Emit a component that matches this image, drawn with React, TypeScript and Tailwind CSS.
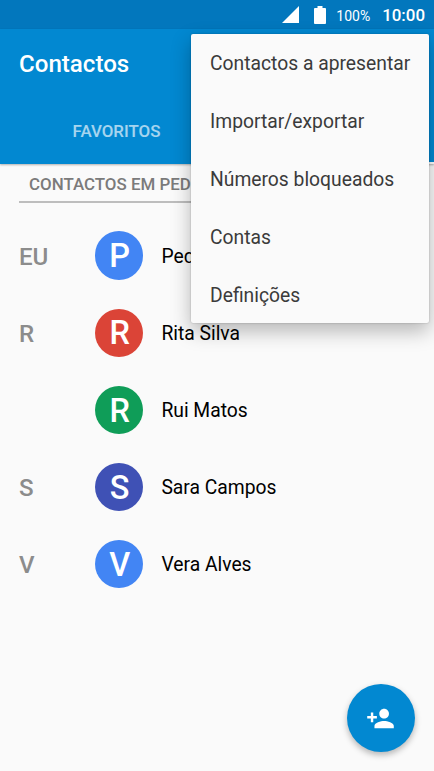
const contacts = [
  { section: 'EU', initial: 'P', name: 'Ped', color: 'bg-[#4285f4]' },
  { section: 'R', initial: 'R', name: 'Rita Silva', color: 'bg-[#db4437]' },
  { section: '', initial: 'R', name: 'Rui Matos', color: 'bg-[#0f9d58]' },
  { section: 'S', initial: 'S', name: 'Sara Campos', color: 'bg-[#3f51b5]' },
  { section: 'V', initial: 'V', name: 'Vera Alves', color: 'bg-[#4285f4]' },
];

const menuItems = [
  'Contactos a apresentar',
  'Importar/exportar',
  'Números bloqueados',
  'Contas',
  'Definições',
];

function StatusBar() {
  return (
    <div className="flex h-[29px] items-center justify-end bg-[#0277bd] pr-[9px] text-white">
      <svg className="mr-[15px] h-[17px] w-[17px]" viewBox="0 0 17 17" fill="#fff">
        <path d="M0 17L17 0V17Z" />
      </svg>
      <svg className="mr-[10px] h-[18px] w-[12px]" viewBox="0 0 12 18" fill="#fff">
        <path d="M3.500 0h5v2h2.600q.9 0 .9.9v14.200q0 .9-.9.9H.9q-.9 0-.9-.9V2.900q0-.9.9-.9H3.500z" />
      </svg>
      <span className="mr-[12px] pt-[2px] text-[14px] leading-none">100%</span>
      <span className="pt-[2px] text-[16.9px] leading-none font-medium">10:00</span>
    </div>
  );
}

function Header() {
  return (
    <header className="relative h-[135px] bg-[#0288d1] shadow-[0_1px_2px_rgba(0,0,0,0.3)]">
      <h1 className="flex h-[69px] items-center pt-[2px] pl-[19px] text-[24.1px] font-medium text-white">Contactos</h1>
      <div className="grid h-[66px] grid-cols-2 text-[16.9px] font-medium">
        <div className="flex items-center justify-center pt-[2px] pl-[16px] text-white/65">FAVORITOS</div>
        <div className="border-b-2 border-white" />
      </div>
    </header>
  );
}

export default function App() {
  return (
    <div className="relative h-[771px] w-[434px] overflow-hidden bg-[#fafafa] font-['Roboto',sans-serif]">
      <StatusBar />
      <Header />
      <main>
        <div className="mx-[19px] mb-[14px] flex h-[39px] items-center border-b-2 border-[#bdbdbd] pt-[4px] pl-[10px] text-[16.9px] font-medium whitespace-nowrap text-[#7b7b7b]">
          CONTACTOS EM PED
        </div>
        {contacts.map((c) => (
          <div key={c.name} className="flex h-[77.150px] items-center">
            <div className="w-[95px] pt-[2px] pl-[19px] text-[24.1px] font-medium text-[#8c8c8c]">{c.section}</div>
            <div className={`flex h-[48.400px] w-[48.400px] items-center justify-center rounded-full pt-[2px] pl-px text-[32.500px] leading-none font-medium text-white ${c.color}`}>
              {c.initial}
            </div>
            <div className="pt-[3px] pl-[18px] text-[19.3px] text-black">{c.name}</div>
          </div>
        ))}
      </main>
      <nav className="absolute top-[34px] left-[190.500px] flex h-[289px] w-[238.500px] flex-col rounded-[2px] bg-[#fafafa] pt-[2px] pl-[19.500px] shadow-[0_8px_20px_rgba(0,0,0,0.28),0_0_2px_rgba(0,0,0,0.25)]">
        {menuItems.map((item) => (
          <div key={item} className="flex h-[57.800px] shrink-0 items-center text-[19.3px] whitespace-nowrap text-[#3b3b3b]">
            {item}
          </div>
        ))}
      </nav>
      <button className="absolute top-[684px] left-[347px] flex h-[68px] w-[68px] items-center justify-center rounded-full bg-[#0288d1] pr-px shadow-[0_3px_6px_rgba(0,0,0,0.28)]">
        <svg className="h-[29px] w-[29px]" viewBox="0 0 24 24" fill="#fff">
          <path d="M15 12c2.210 0 4-1.790 4-4s-1.790-4-4-4-4 1.790-4 4 1.790 4 4 4zm-9-2V7H4v3H1v2h3v3h2v-3h3v-2H6zm9 4c-2.670 0-8 1.340-8 4v2h16v-2c0-2.660-5.330-4-8-4z" />
        </svg>
      </button>
    </div>
  );
}
